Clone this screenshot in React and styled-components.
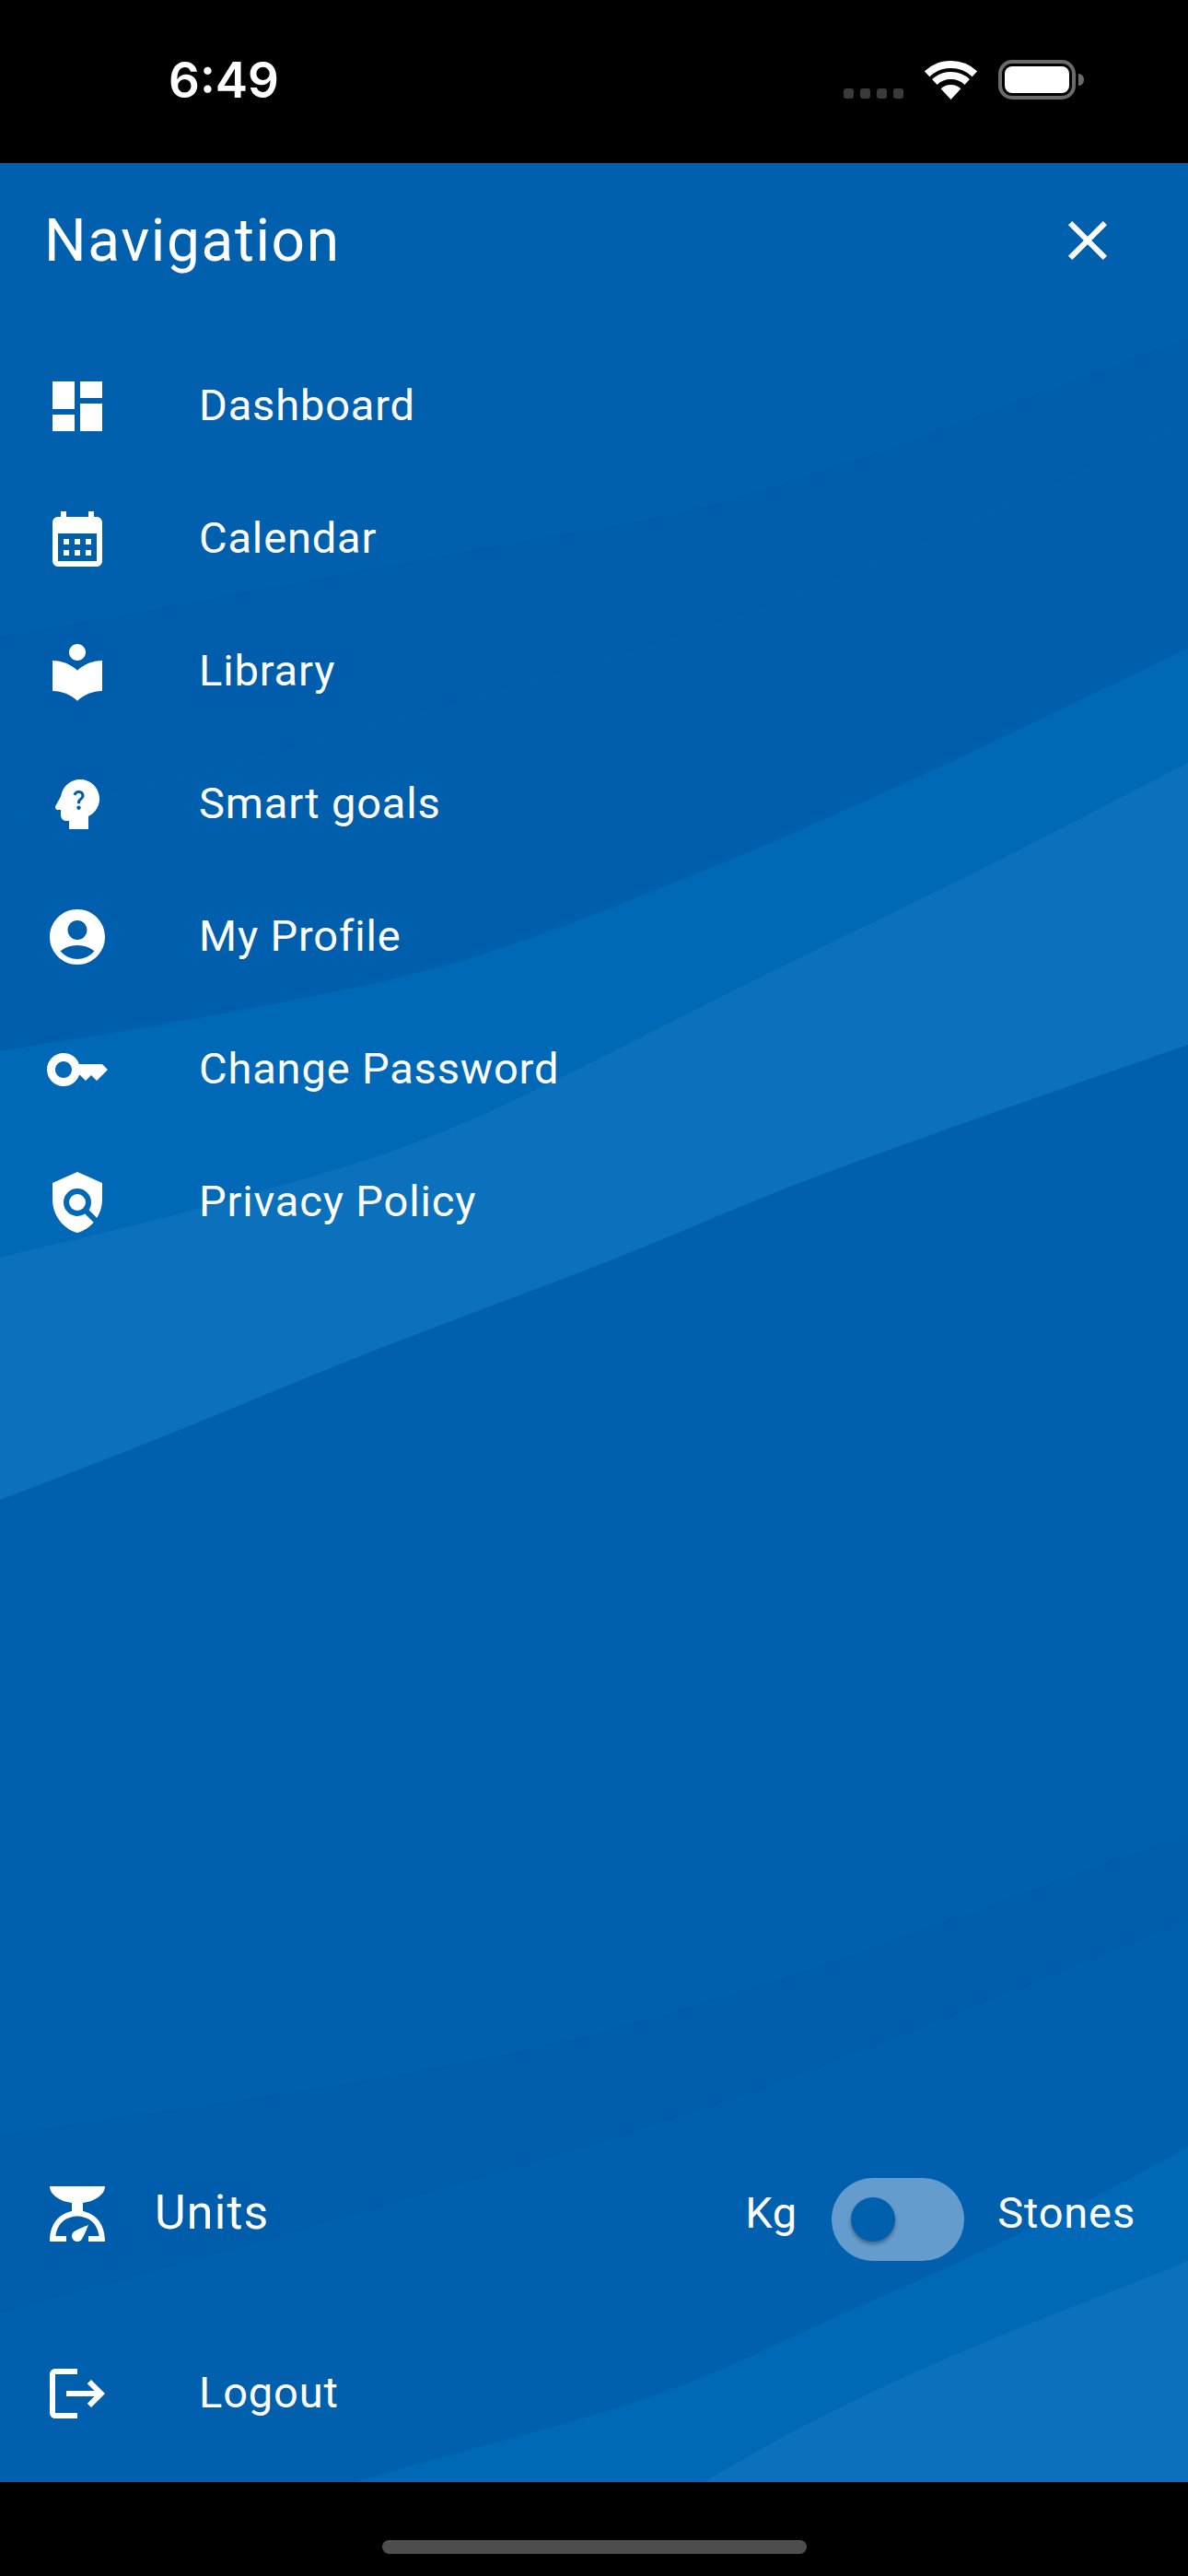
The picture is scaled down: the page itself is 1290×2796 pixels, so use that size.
import React from 'react';
import styled, { createGlobalStyle } from 'styled-components';
import {
  MdDashboard,
  MdCalendarMonth,
  MdLocalLibrary,
  MdPsychologyAlt,
  MdAccountCircle,
  MdKey,
  MdPolicy,
  MdScale,
  MdLogout,
  MdClose,
} from 'react-icons/md';

const GlobalStyle = createGlobalStyle`
  html, body {
    margin: 0;
    padding: 0;
    background: #000;
    font-family: Roboto, "Liberation Sans", sans-serif;
  }
`;

const Screen = styled.div`
  width: 1290px;
  height: 2796px;
  display: flex;
  flex-direction: column;
  background: #000;
  overflow: hidden;
`;

const StatusBar = styled.div`
  height: 177px;
  flex: none;
  display: flex;
  align-items: flex-start;
  justify-content: space-between;
  box-sizing: border-box;
  padding: 55px 122px 0 183px;
`;

const Clock = styled.span`
  font-family: Inter, sans-serif;
  font-size: 53px;
  line-height: 64px;
  font-weight: 600;
  color: #fff;
`;

const StatusIcons = styled.div`
  display: flex;
  align-items: flex-end;
  margin-top: 10px;
`;

const SignalDots = styled.div`
  display: flex;
  gap: 7px;
  margin-right: 23px;
  padding-bottom: 1px;
`;

const SignalDot = styled.span`
  width: 11px;
  height: 11px;
  border-radius: 3px;
  background: #3a3a3a;
`;

const Battery = styled.div`
  position: relative;
  width: 84px;
  height: 43px;
  margin-left: 23px;
  box-sizing: border-box;
  border: 4px solid #6b6b6b;
  border-radius: 15px;
  padding: 3px;

  &::before {
    content: '';
    display: block;
    height: 100%;
    border-radius: 8px;
    background: #fff;
  }

  &::after {
    content: '';
    position: absolute;
    right: -13px;
    top: 11px;
    width: 6px;
    height: 13px;
    border-radius: 0 6px 6px 0;
    background: #6b6b6b;
  }
`;

const Panel = styled.div`
  position: relative;
  flex: 1;
  display: flex;
  flex-direction: column;
  background: #0060ae;
  color: #fff;
`;

const Waves = styled.svg`
  position: absolute;
  inset: 0;
  width: 100%;
  height: 100%;
`;

const Header = styled.div`
  position: relative;
  display: flex;
  align-items: center;
  justify-content: space-between;
  height: 72px;
  padding: 48px 73px 72px 48px;
`;

const Title = styled.h1`
  margin: 1px 0 0;
  font-size: 64px;
  line-height: 72px;
  font-weight: 400;
  letter-spacing: 1.6px;
`;

const Nav = styled.nav`
  position: relative;
  display: flex;
  flex-direction: column;
`;

const Row = styled.div`
  display: flex;
  align-items: center;
  height: 144px;
  padding-left: 48px;
`;

const IconSlot = styled.span`
  width: 72px;
  height: 72px;
  flex: none;
  display: flex;
  font-size: 72px;
  margin-right: ${props => props.$gap}px;
`;

const Label = styled.span`
  font-size: 47px;
  letter-spacing: 0.85px;
  line-height: 56px;
  margin-top: -3px;
`;

const Footer = styled.div`
  position: relative;
  margin-top: auto;
  display: flex;
  flex-direction: column;
  gap: 51px;
  padding-bottom: 24px;
`;

const UnitsRow = styled(Row)`
  justify-content: space-between;
  padding-right: 57px;
`;

const UnitsName = styled.div`
  display: flex;
  align-items: center;
`;

const UnitsLabel = styled(Label)`
  font-size: 52px;
  letter-spacing: 1.1px;
  margin-top: -2px;
`;

const UnitsSwitch = styled.div`
  display: flex;
  align-items: center;
`;

const SwitchLabel = styled(Label)`
  margin-top: -2px;
`;

const Track = styled.div`
  width: 144px;
  height: 90px;
  margin: 12px 36px 0 37px;
  border-radius: 45px;
  background: #659cce;
  display: flex;
  align-items: center;
  padding-left: 21px;
  box-sizing: border-box;
`;

const Thumb = styled.span`
  width: 48px;
  height: 48px;
  border-radius: 50%;
  background: #0060ae;
  box-shadow: 0 3px 4px rgba(0, 0, 0, 0.35);
`;

const HomeBar = styled.div`
  height: 102px;
  flex: none;
  display: flex;
  justify-content: center;
  padding-top: 63px;
  box-sizing: border-box;
`;

const HomeIndicator = styled.span`
  width: 461px;
  height: 15px;
  border-radius: 8px;
  background: #4d4d4d;
`;

const items = [
  { label: 'Dashboard', Icon: MdDashboard },
  { label: 'Calendar', Icon: MdCalendarMonth },
  { label: 'Library', Icon: MdLocalLibrary },
  { label: 'Smart goals', Icon: MdPsychologyAlt },
  { label: 'My Profile', Icon: MdAccountCircle },
  { label: 'Change Password', Icon: MdKey },
  { label: 'Privacy Policy', Icon: MdPolicy },
];

const WifiIcon = () => (
  <svg width="57" height="42" viewBox="0 0 57 42">
    <g fill="none" stroke="#fff" strokeWidth="8">
      <path d="M2.6 14.2A38 38 0 0 1 54.4 14.2" />
      <path d="M10.8 23A26 26 0 0 1 46.2 23" />
    </g>
    <path d="M28.5 42L17.6 30.3A16 16 0 0 1 39.4 30.3Z" fill="#fff" />
  </svg>
);

// smooth curve through the points, catmull-rom turned into beziers
const curve = points =>
  points
    .slice(1)
    .map((p, i) => {
      const p0 = points[Math.max(i - 1, 0)];
      const p1 = points[i];
      const p3 = points[Math.min(i + 2, points.length - 1)];
      const c1 = [p1[0] + (p[0] - p0[0]) / 6, p1[1] + (p[1] - p0[1]) / 6];
      const c2 = [p[0] - (p3[0] - p1[0]) / 6, p[1] - (p3[1] - p1[1]) / 6];
      return `C${c1.join(' ')} ${c2.join(' ')} ${p.join(' ')}`;
    })
    .join('');

// area between two edges, both given left to right
const band = (top, bottom) => {
  const back = [...bottom].reverse();
  return `M${top[0].join(' ')}${curve(top)}L${back[0].join(' ')}${curve(back)}Z`;
};

const lineA = [[0, 514], [494, 423], [823, 356], [1290, 189]];
const lineB = [[0, 711], [329, 630], [823, 483], [1290, 280]];
const midTop = [[0, 964], [247, 922], [494, 868], [740, 778], [987, 671], [1290, 527]];
const lightTop = [[0, 1188], [247, 1126], [494, 1046], [823, 885], [1070, 764], [1290, 651]];
const lightBottom = [[0, 1451], [165, 1387], [411, 1287], [658, 1193], [905, 1093], [1290, 957]];
const lineC = [[0, 2140], [645, 2030], [1290, 1813]];
const lineD = [[0, 2334], [329, 2243], [800, 2100], [1290, 1908]];

const WaveBackground = () => (
  <Waves viewBox="0 0 1290 2517" preserveAspectRatio="none">
    <path d={band(lineA, midTop)} fill="#005dac" />
    <path d={band(lineB, midTop)} fill="#005fad" />
    <path d={band(lineC, lineD)} fill="#005dab" />
    <path d={band(midTop, lightBottom)} fill="#0069b7" />
    <path d={band(lightTop, lightBottom)} fill="#0c71bc" />
    <path d="M387 2517C540 2470 680 2445 823 2377S1120 2250 1290 2153V2517Z" fill="#0069b7" />
    <path d="M765 2517C960 2400 1110 2350 1290 2277V2517Z" fill="#0c71bc" />
  </Waves>
);

const App = () => (
  <>
    <GlobalStyle />
    <Screen>
      <StatusBar>
        <Clock>6:49</Clock>
        <StatusIcons>
          <SignalDots>
            <SignalDot />
            <SignalDot />
            <SignalDot />
            <SignalDot />
          </SignalDots>
          <WifiIcon />
          <Battery />
        </StatusIcons>
      </StatusBar>
      <Panel>
        <WaveBackground />
        <Header>
          <Title>Navigation</Title>
          <MdClose size={72} />
        </Header>
        <Nav>
          {items.map(({ label, Icon }) => (
            <Row key={label}>
              <IconSlot $gap={96}>
                <Icon />
              </IconSlot>
              <Label>{label}</Label>
            </Row>
          ))}
        </Nav>
        <Footer>
          <UnitsRow>
            <UnitsName>
              <IconSlot $gap={48}>
                <MdScale />
              </IconSlot>
              <UnitsLabel>Units</UnitsLabel>
            </UnitsName>
            <UnitsSwitch>
              <SwitchLabel>Kg</SwitchLabel>
              <Track>
                <Thumb />
              </Track>
              <SwitchLabel>Stones</SwitchLabel>
            </UnitsSwitch>
          </UnitsRow>
          <Row>
            <IconSlot $gap={96}>
              <MdLogout />
            </IconSlot>
            <Label>Logout</Label>
          </Row>
        </Footer>
      </Panel>
      <HomeBar>
        <HomeIndicator />
      </HomeBar>
    </Screen>
  </>
);

export default App;
